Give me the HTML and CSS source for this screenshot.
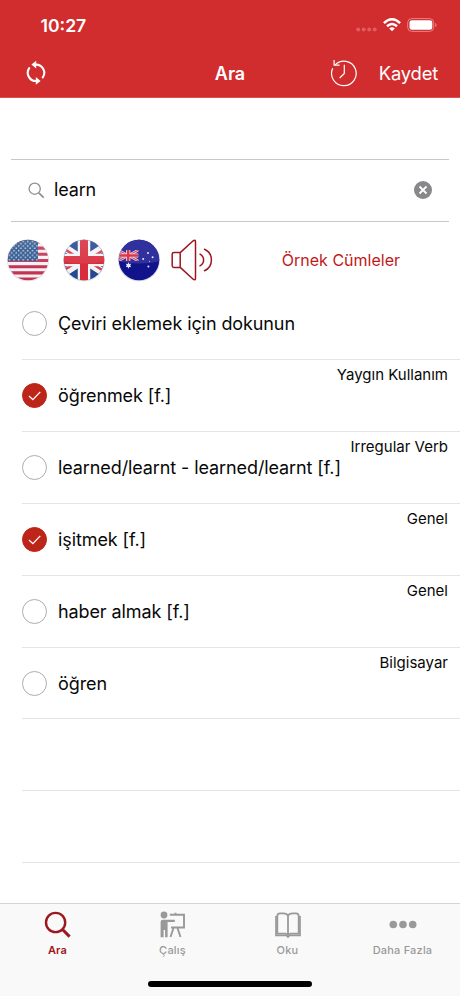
FILE: index.html
```html
<!DOCTYPE html>
<html lang="tr">
<head>
<meta charset="utf-8">
<title>Ara</title>
<link rel="stylesheet" href="styles.css">
</head>
<body>
<div class="app">
  <header class="header">
    <div class="status">
      <span class="time">10:27</span>
      <div class="indicators">
        <svg width="21" height="14" viewBox="0 0 21 14" fill="#e25c5d"><circle cx="2.2" cy="11.5" r="2"/><circle cx="7.7" cy="11.5" r="2"/><circle cx="13.2" cy="11.5" r="2"/><circle cx="18.7" cy="11.5" r="2"/></svg>
        <svg class="wifi" width="18" height="14" viewBox="0 0 18 14" fill="none" stroke="#fff" stroke-width="2.5"><path d="M.9 5.1Q9-2.5 17.1 5.1M4 8.3Q9 3.8 14 8.3"/><path d="M6.2 10.4Q9 8.2 11.8 10.4L9 13.2Z" fill="#fff" stroke="none"/></svg>
        <svg width="30" height="14" viewBox="0 0 30 14"><rect x=".7" y=".6" width="26" height="12.8" rx="4" fill="none" stroke="#e98282" stroke-width="1"/><rect x="2.5" y="2.2" width="22.8" height="9.6" rx="2.4" fill="#fff"/><path d="M28.2 4.8Q29.6 5.5 29.6 7T28.2 9.2Z" fill="#e98282"/></svg>
      </div>
    </div>
    <nav class="nav">
      <svg class="sync" width="20" height="26" viewBox="0 0 20 26"><g fill="none" stroke="#fff" stroke-width="2.1" stroke-linecap="round"><path d="M9.5 4.6A8.2 8.2 0 0 1 16.8 17.4"/><path d="M10.5 21A8.2 8.2 0 0 1 3.2 8.2"/></g><path d="M10.2.8V8.6L5.4 4.6ZM9.8 17V24.8L14.6 21Z" fill="#fff"/></svg>
      <h1 class="title">Ara</h1>
      <div class="actions">
        <svg width="28" height="28" viewBox="0 0 28 28" fill="none" stroke="#fff" stroke-width="1.2"><path d="M5.1 5.8A12.3 12.3 0 1 1 2.7 9.3"/><path d="M4.1 1V6.2H9.6M14.3 5.7V14.4L9.7 19"/></svg>
        <span class="save">Kaydet</span>
      </div>
    </nav>
  </header>

  <div class="search">
    <svg width="17" height="17" viewBox="0 0 17 17" fill="none" stroke="#8e8e93" stroke-width="1.3"><circle cx="6.7" cy="6.7" r="5.6"/><path d="M10.8 10.8L15.7 15.7" stroke-width="1.7"/></svg>
    <span class="query">learn</span>
    <svg class="clear" width="18" height="18" viewBox="0 0 18 18"><circle cx="9" cy="9" r="9" fill="#88888a"/><path d="M5.5 5.5L12.5 12.5M12.5 5.5L5.5 12.5" stroke="#fff" stroke-width="1.8"/></svg>
  </div>

  <div class="voices">
    <svg width="44" height="44" viewBox="0 0 44 44">
      <defs>
        <clipPath id="disc"><circle cx="22" cy="22" r="20.2"/></clipPath>
        <pattern id="stars" width="4.6" height="4.6" patternUnits="userSpaceOnUse"><circle cx="1.1" cy="1.1" r=".8" fill="#c9d8e8"/><circle cx="3.4" cy="3.4" r=".8" fill="#c9d8e8"/></pattern>
        <linearGradient id="shine" x2="0" y2="1"><stop offset="0" stop-color="#fff" stop-opacity=".14"/><stop offset="1" stop-color="#fff" stop-opacity=".06"/></linearGradient>
      </defs>
      <circle cx="22" cy="22.3" r="21" fill="#dfe1e8"/>
      <g clip-path="url(#disc)"><path fill="#f4f1f5" d="M0 0H44V44H0Z"/><path d="M0 3.9H44M0 10.1H44M0 16.3H44M0 22.5H44M0 28.7H44M0 34.9H44M0 41.1H44" stroke="#c53252" stroke-width="3.1"/><path fill="#29528a" d="M0 0H32V23H0Z"/><path fill="url(#stars)" d="M0 0H32V23H0Z"/><path d="M0 0H44V23Q22 28 0 23Z" fill="url(#shine)"/></g>
    </svg>
    <svg width="44" height="44" viewBox="0 0 44 44">
      <circle cx="22" cy="22.3" r="21" fill="#dfe1e8"/>
      <g clip-path="url(#disc)"><path fill="#244991" d="M0 0H44V44H0Z"/><path d="M-6 4L50 40M-6 40L50 4" stroke="#f5f2f6" stroke-width="7.5"/><path d="M-7 5L22 23.6M51 39L22 20.4M-7 38L22 19.4M51 6L22 24.6" stroke="#d63b4a" stroke-width="2.5"/><path d="M22 0V44M0 22H44" stroke="#f6f3f7" stroke-width="12.5"/><path d="M22 0V44M0 22H44" stroke="#d82d3d" stroke-width="8"/><path d="M0 0H44V23Q22 28 0 23Z" fill="url(#shine)"/></g>
    </svg>
    <svg width="44" height="44" viewBox="0 0 44 44">
      <circle cx="22" cy="22.3" r="21" fill="#d5d7e2"/>
      <g clip-path="url(#disc)"><path fill="#11138b" d="M0 0H44V44H0Z"/><path fill="#30319d" d="M0 0H44V23Q22 28 0 23Z"/>
      <svg x="1" y="12" width="20.5" height="11" viewBox="0 0 40 22" preserveAspectRatio="none"><path d="M0 0L40 22M0 22L40 0" stroke="#f0dbe6" stroke-width="5"/><path d="M0 0L40 22M0 22L40 0" stroke="#e35160" stroke-width="2.5"/><path d="M20 0V22M0 11H40" stroke="#f3dfe6" stroke-width="8"/><path d="M20 0V22M0 11H40" stroke="#df3548" stroke-width="4.8"/></svg>
      <g fill="#e8eaff"><path d="M11.5 24.2l.8 1.7 1.9-.1-1 1.6 1 1.6-1.9-.1-.8 1.8-.8-1.8-1.9.1 1-1.6-1-1.6 1.9.1Z"/><circle cx="31" cy="15" r="1"/><circle cx="26.2" cy="21" r="1"/><circle cx="35.6" cy="19.3" r="1"/><circle cx="32.5" cy="23.2" r=".5"/><circle cx="31.4" cy="28.6" r="1"/></g></g>
    </svg>
    <svg class="speaker" width="42" height="42" viewBox="0 0 42 42" fill="none" stroke="#9b1720" stroke-width="1.5" stroke-linejoin="round" stroke-linecap="round"><path d="M9.2 13.6L22.2 1.8Q24.5.2 24.5 2.7V39.3Q24.5 41.8 22.2 40.2L9.2 28.4H3Q1.2 28.4 1.2 26.8V15.2Q1.2 13.6 3 13.6ZM9.2 13.6V28.4M29 15.2Q32.6 17.2 32.6 21T29 26.8M33.5 10.2C42.7 14.4 42.7 27.6 33.5 31.8"/></svg>
    <span class="examples">Örnek Cümleler</span>
  </div>

  <ul class="list">
    <li class="row"><span class="check"></span><span class="word">Çeviri eklemek için dokunun</span></li>
    <li class="row"><span class="check on"><svg width="24" height="24" viewBox="0 0 24 24"><path d="M6.2 12.5L10.3 16.3L18 8.2"/></svg></span><span class="word">öğrenmek [f.]</span><span class="tag">Yaygın Kullanım</span></li>
    <li class="row"><span class="check"></span><span class="word">learned/learnt - learned/learnt [f.]</span><span class="tag">Irregular Verb</span></li>
    <li class="row"><span class="check on"><svg width="24" height="24" viewBox="0 0 24 24"><path d="M6.2 12.5L10.3 16.3L18 8.2"/></svg></span><span class="word">işitmek [f.]</span><span class="tag">Genel</span></li>
    <li class="row"><span class="check"></span><span class="word">haber almak [f.]</span><span class="tag">Genel</span></li>
    <li class="row"><span class="check"></span><span class="word">öğren</span><span class="tag">Bilgisayar</span></li>
    <li class="row"></li>
    <li class="row"></li>
  </ul>

  <footer class="tabbar">
    <div class="tabs">
      <div class="tab active"><svg width="28" height="28" viewBox="0 0 28 28" fill="none" stroke="#9d1720"><circle cx="11.6" cy="11.5" r="9.6" stroke-width="2.4"/><path d="M18.3 18.3L25.6 25.6" stroke-width="3"/></svg><span>Ara</span></div>
      <div class="tab"><svg width="28" height="28" viewBox="0 0 28 28" fill="none" stroke="#999"><circle cx="5" cy="4" r="3.4" fill="#999" stroke="none"/><path d="M1.6 11Q1.6 8.8 3.8 8.8H15.8V10.9H8.6V26.2H6.1V19H4.6V26.2H1.6Z" fill="#999" stroke="none"/><path d="M10.8 3.7H25V16.5H12M16.5 1.8V4M14.5 17L11.5 26M18.5 17L21.5 26" stroke-width="1.9"/></svg><span>Çalış</span></div>
      <div class="tab"><svg width="28" height="28" viewBox="0 0 28 28" fill="none" stroke="#999" stroke-width="1.8"><path d="M14 4.3Q12.4 2.4 9.5 2.4H6Q3.3 2.4 3.3 5V22.7H11.5L14 24M14 4.3Q15.6 2.4 18.5 2.4H22Q24.7 2.4 24.7 5V22.7H16.5L14 24M14 4.3V23"/><path d="M2 5V24.4H12.5L14 26L15.5 24.4H26V5" stroke-width="1.7"/></svg><span>Oku</span></div>
      <div class="tab"><svg width="28" height="28" viewBox="0 0 28 28" fill="#999"><circle cx="4.3" cy="13.5" r="3.8"/><circle cx="14" cy="13.5" r="3.8"/><circle cx="23.7" cy="13.5" r="3.8"/></svg><span>Daha Fazla</span></div>
    </div>
    <div class="home"></div>
  </footer>
</div>
</body>
</html>
```

FILE: styles.css
```css
* { box-sizing: border-box; }
body { margin: 0; background: #fff; color: #080808; font-family: Inter, "Liberation Sans", sans-serif; }
svg { display: block; flex: none; }
.app { width: 460px; height: 996px; display: flex; flex-direction: column; overflow: hidden; }
.header { height: 98px; flex: none; background: #d12c2e; color: #fff; border-bottom: 1px solid #db5052; }
.status { height: 49px; padding: 1px 23.5px 0 40.5px; display: flex; align-items: center; justify-content: space-between; }
.time { font-size: 17.6px; font-weight: 600; }
.indicators { display: flex; align-items: center; gap: 6px; }
.nav { height: 48px; padding: 0 22px 0 26px; display: grid; grid-template-columns: 1fr auto 1fr; align-items: center; }
.title { margin: 2px 0 0 -4px; font-size: 18px; line-height: 24px; font-weight: 600; }
.actions { display: flex; align-items: center; justify-content: flex-end; gap: 21px; }
.save { font-size: 18.4px; letter-spacing: -0.2px; }
.search { height: 63px; flex: none; margin: 61px 11px 0; padding: 0 17px 1px; border: solid #c8c8c8; border-width: 1px 0; display: flex; align-items: center; }
.query { margin: -2px 0 0 9px; font-size: 18px; letter-spacing: -0.15px; }
.clear { margin-left: auto; }
.voices { height: 66px; flex: none; padding: 0 60px 0 6px; display: flex; align-items: flex-start; gap: 11.5px; }
.voices svg { margin-top: 16px; }
.voices .speaker { margin: 17px 0 0 -2px; }
.examples { margin: 28px 0 0 auto; line-height: 20px; font-size: 16px; color: #bf1a20; }
.list { margin: 0; padding: 0; list-style: none; flex: none; }
.row { height: 71.91px; margin-left: 22px; padding: 1px 12px 0 0; border-bottom: 1px solid #e4e4e5; display: flex; align-items: center; }
.check { width: 25px; height: 25px; flex: none; border: 1px solid #adadad; border-radius: 50%; }
.check.on { background: #bd2518; border-color: #bd2518; }
.check svg { width: 23px; height: 23px; fill: none; stroke: #fff; stroke-width: 1.4; }
.word { margin-left: 11px; font-size: 18px; letter-spacing: -0.1px; white-space: nowrap; }
.tag { margin: 4px 0 0 auto; align-self: flex-start; font-size: 15px; line-height: 20px; white-space: nowrap; }
.tabbar { margin-top: auto; height: 93px; flex: none; background: #f9f9f9; border-top: 1px solid #d4d4d4; }
.tabs { display: grid; grid-template-columns: repeat(4, 1fr); height: 77px; padding-top: 7px; }
.tab { display: flex; flex-direction: column; align-items: center; color: #999; font-size: 11px; line-height: 14px; font-weight: 500; letter-spacing: .2px; gap: 4px; }
.active { color: #9d1720; font-weight: 600; }
.home { width: 164px; height: 6px; margin: 0 auto; border-radius: 3px; background: #000; }
```
